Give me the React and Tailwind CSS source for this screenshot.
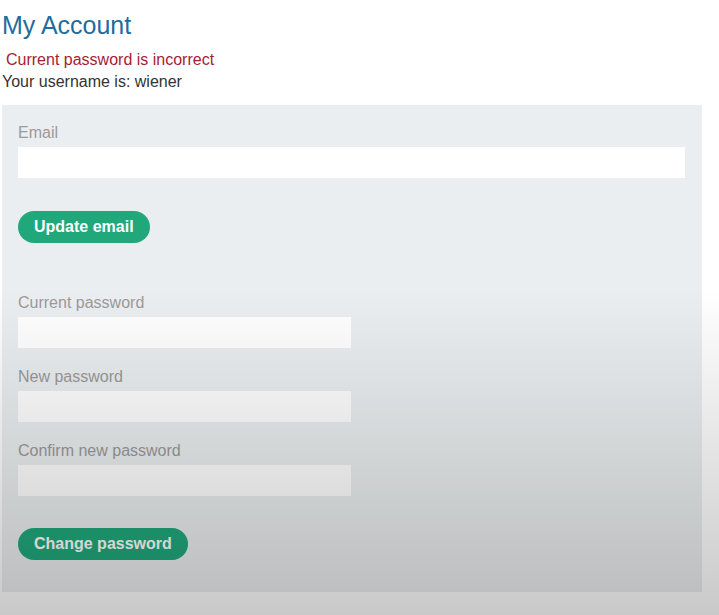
import React, { useState } from "react";

const Field = ({ label, className, wide, ...props }) => (
  <div className={className}>
    <label className="block text-[16px] leading-[22px] text-[#9a9a9a]">{label}</label>
    <input
      {...props}
      className={`mt-[3px] block h-[31px] bg-white px-2 text-[16px] outline-none ${
        wide ? "w-[667px]" : "w-[333px]"
      }`}
    />
  </div>
);

const App = () => {
  const [data, setData] = useState({
    email: "",
    current: "",
    next: "",
    confirm: "",
  });

  const handleChange = (e) => {
    const { name, value } = e.target;
    setData((prev) => ({ ...prev, [name]: value }));
  };

  return (
    <div className="relative h-[615px] overflow-hidden bg-white font-['Liberation_Sans',Arial,sans-serif]">
      <div className="pt-[10px]">
        <h1 className="pl-[2px] text-[25px] leading-[30px] text-[#1f6c9f]">My Account</h1>

        <p className="mt-[9px] pl-[6px] text-[16px] leading-[22px] text-[#a51d33]">
          Current password is incorrect
        </p>
        <p className="pl-[2px] text-[16px] leading-[22px] text-[#333]">Your username is: wiener</p>

        {/* Account panel */}
        <div className="ml-[2px] mt-[12px] w-[700px] bg-[#ebeef0] pl-[16px] pr-[17px] pt-[17px] pb-[32px]">
          <form onSubmit={(e) => e.preventDefault()}>
            <Field label="Email" name="email" type="email" wide value={data.email} onChange={handleChange} />
            <button
              type="submit"
              className="mt-[33px] h-[32px] rounded-full bg-[#20a87b] px-4 text-[16px] font-bold text-white"
            >
              Update email
            </button>
          </form>

          <form onSubmit={(e) => e.preventDefault()}>
            <Field
              className="mt-[49px]"
              label="Current password"
              name="current"
              type="password"
              value={data.current}
              onChange={handleChange}
            />
            <Field
              className="mt-[18px]"
              label="New password"
              name="next"
              type="password"
              value={data.next}
              onChange={handleChange}
            />
            <Field
              className="mt-[18px]"
              label="Confirm new password"
              name="confirm"
              type="password"
              value={data.confirm}
              onChange={handleChange}
            />
            <button
              type="submit"
              className="mt-[32px] h-[32px] rounded-full bg-[#20a87b] px-4 text-[16px] font-bold text-white"
            >
              Change password
            </button>
          </form>
        </div>
      </div>

      {/* darkening toward the bottom of the screenshot */}
      <div className="pointer-events-none absolute inset-0 bg-[linear-gradient(to_bottom,transparent_290px,rgba(0,0,0,0.21))]" />
    </div>
  );
};

export default App;
